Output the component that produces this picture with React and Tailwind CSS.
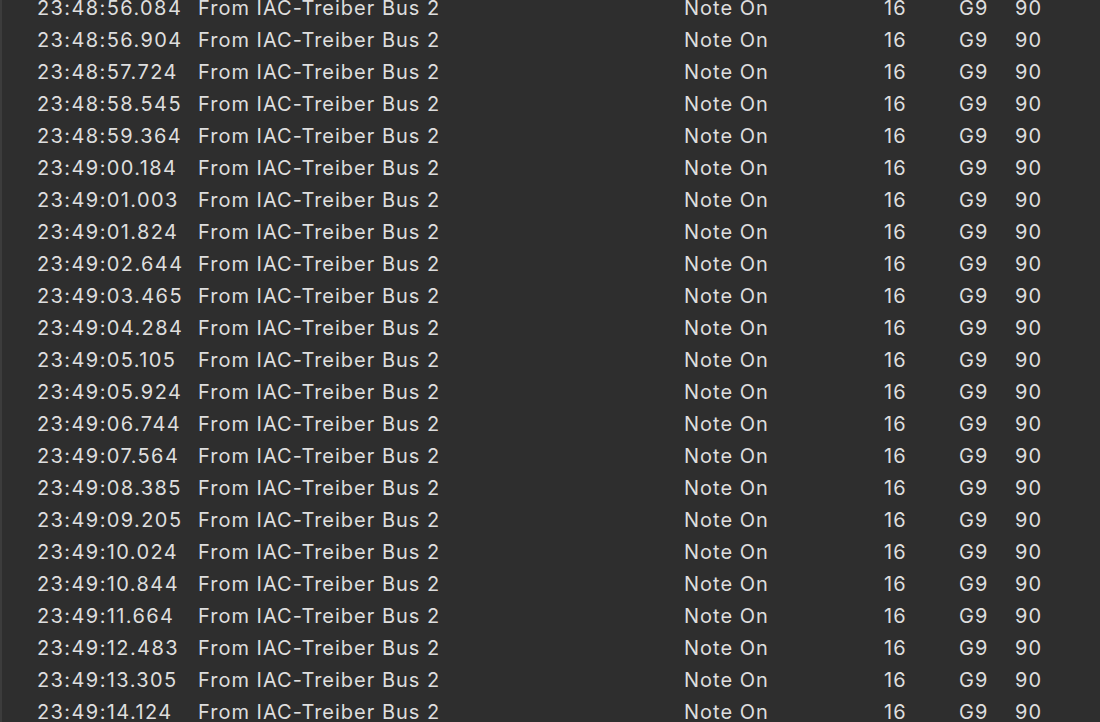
import React from "react";

const times = [
  "23:48:56.084","23:48:56.904","23:48:57.724","23:48:58.545","23:48:59.364",
  "23:49:00.184","23:49:01.003","23:49:01.824","23:49:02.644","23:49:03.465",
  "23:49:04.284","23:49:05.105","23:49:05.924","23:49:06.744","23:49:07.564",
  "23:49:08.385","23:49:09.205","23:49:10.024","23:49:10.844","23:49:11.664",
  "23:49:12.483","23:49:13.305","23:49:14.124",
];

export default function App() {
  return (
    <div className="w-[1100px] h-[722px] overflow-hidden bg-[#2e2e2e] flex">
      <div className="w-[2px] bg-[#3c3c3c] shrink-0" />
      <div className="flex-1 flex flex-col -mt-[8px] text-[20px] text-[#dedede] leading-[32px] tracking-[1px]" style={{ fontFamily: "Inter, 'Noto Sans', sans-serif" }}>
        {times.map((t) => (
          <div key={t} className="h-[32px] flex items-center shrink-0 whitespace-nowrap">
            <span className="w-[196px] pl-[35px] shrink-0 tracking-[1.4px]">{t}</span>
            <span className="w-[486px] shrink-0">From IAC-Treiber Bus 2</span>
            <span className="w-[200px] shrink-0">Note On</span>
            <span className="w-[75px] shrink-0">16</span>
            <span className="w-[56px] shrink-0">G9</span>
            <span>90</span>
          </div>
        ))}
      </div>
    </div>
  );
}
